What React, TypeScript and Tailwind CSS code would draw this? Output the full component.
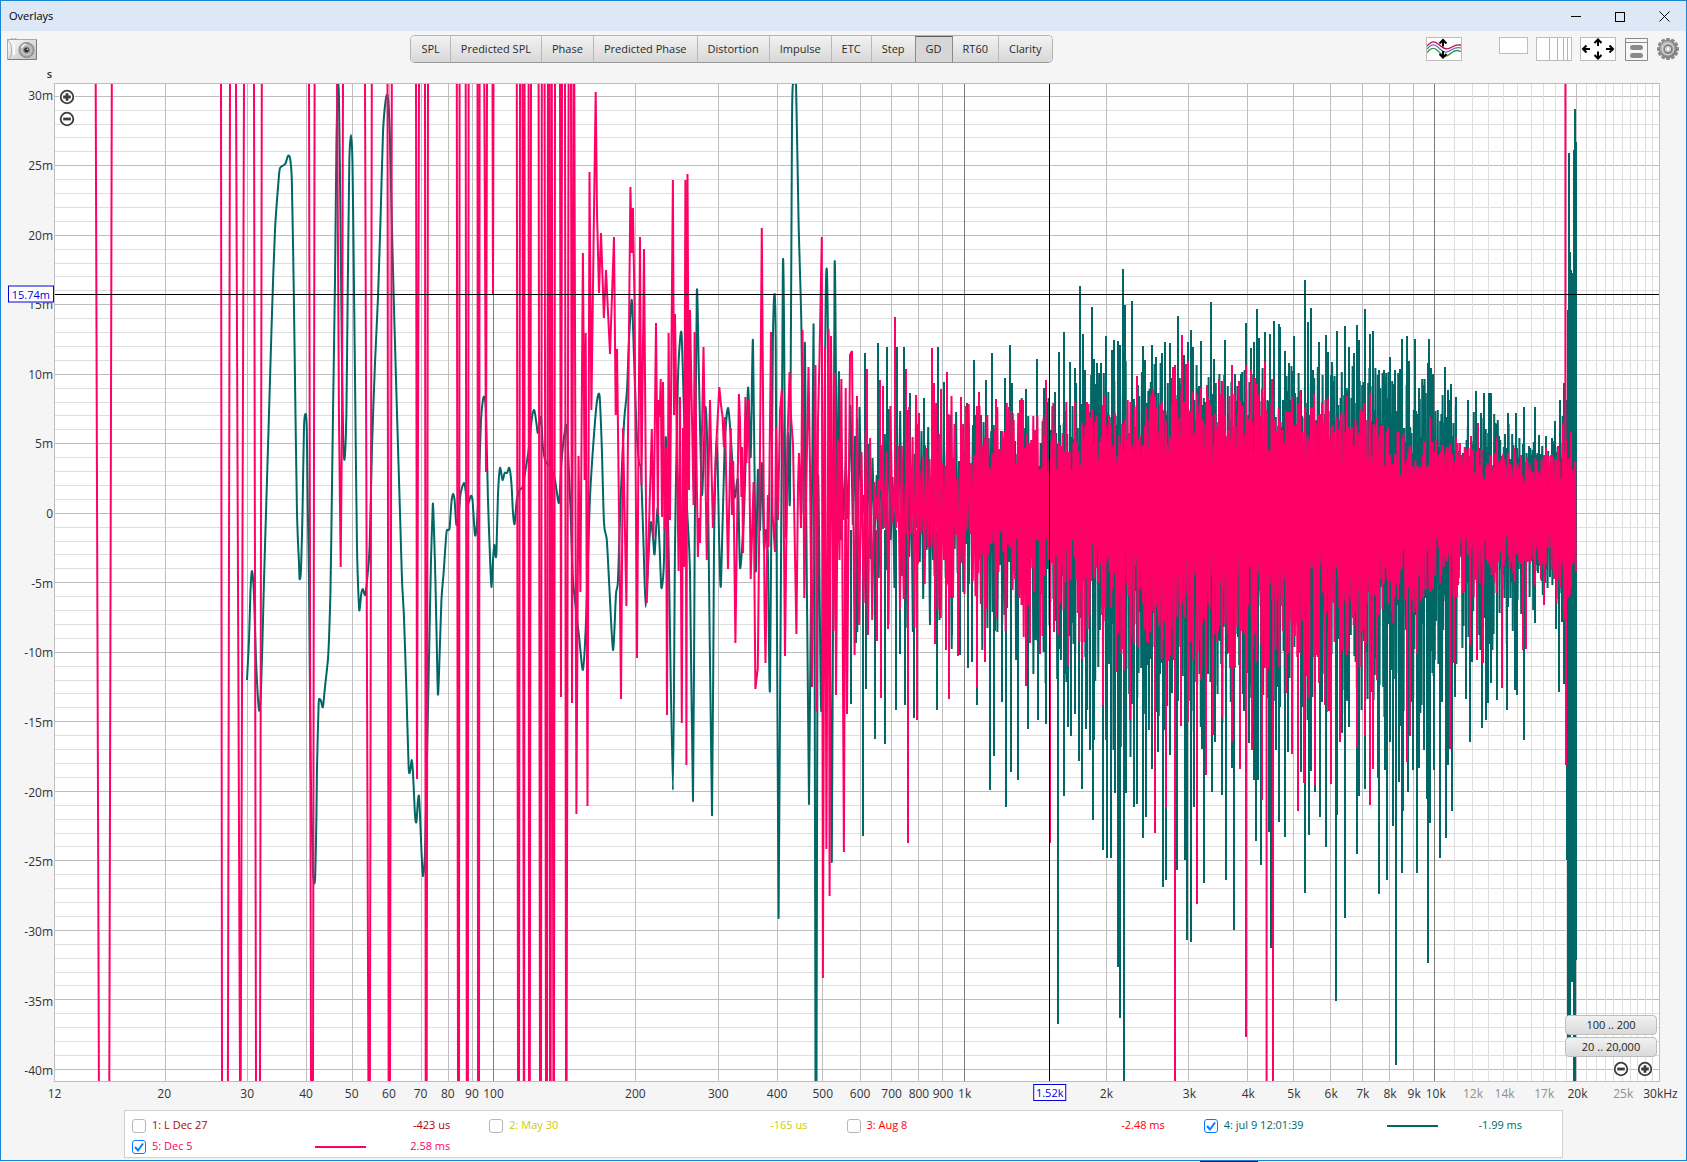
import { useState } from "react";
import { clsx } from "clsx";

const TEAL = "#006666";
const PINK = "#ff0066";

// Axis limits: hertz along the bottom (log), milliseconds up the side (linear).
const F_MIN = 11.67;
const F_MAX = 29930;
const MS_MAX = 30.88;
const MS_MIN = -40.84;
const CURSOR_HZ = 1516;
const CURSOR_MS = 15.74;

const fx = (f: number) => Math.log(f / F_MIN) / Math.log(F_MAX / F_MIN);
const fy = (ms: number) => (MS_MAX - ms) / (MS_MAX - MS_MIN);
const pct = (n: number) => `${n * 100}%`;

const TABS = [
  "SPL",
  "Predicted SPL",
  "Phase",
  "Predicted Phase",
  "Distortion",
  "Impulse",
  "ETC",
  "Step",
  "GD",
  "RT60",
  "Clarity",
];

const Y_TICKS = [30, 25, 20, 15, 10, 5, 0, -5, -10, -15, -20, -25, -30, -35, -40];

const X_TICKS: { f: number; label: string; dim?: boolean }[] = [
  { f: 11.7, label: "12" },
  { f: 20, label: "20" },
  { f: 30, label: "30" },
  { f: 40, label: "40" },
  { f: 50, label: "50" },
  { f: 60, label: "60" },
  { f: 70, label: "70" },
  { f: 80, label: "80" },
  { f: 90, label: "90" },
  { f: 100, label: "100" },
  { f: 200, label: "200" },
  { f: 300, label: "300" },
  { f: 400, label: "400" },
  { f: 500, label: "500" },
  { f: 600, label: "600" },
  { f: 700, label: "700" },
  { f: 800, label: "800" },
  { f: 900, label: "900" },
  { f: 1000, label: "1k" },
  { f: 2000, label: "2k" },
  { f: 3000, label: "3k" },
  { f: 4000, label: "4k" },
  { f: 5000, label: "5k" },
  { f: 6000, label: "6k" },
  { f: 7000, label: "7k" },
  { f: 8000, label: "8k" },
  { f: 9000, label: "9k" },
  { f: 10000, label: "10k" },
  { f: 12000, label: "12k", dim: true },
  { f: 14000, label: "14k", dim: true },
  { f: 17000, label: "17k", dim: true },
  { f: 20000, label: "20k" },
  { f: 25000, label: "25k", dim: true },
  { f: 30000, label: "30kHz" },
];

interface Measurement {
  id: number;
  name: string;
  value: string;
  text: string;
  stroke: string;
  shown: boolean;
}

const MEASUREMENTS: Measurement[] = [
  { id: 1, name: "L Dec 27", value: "-423 us", text: "text-[#b00000]", stroke: "#b00000", shown: false },
  { id: 2, name: "May 30", value: "-165 us", text: "text-[#cccc00]", stroke: "#cccc00", shown: false },
  { id: 3, name: "Aug 8", value: "-2.48 ms", text: "text-[#ff0000]", stroke: "#ff0000", shown: false },
  { id: 4, name: "jul 9 12:01:39", value: "-1.99 ms", text: "text-[#006666]", stroke: TEAL, shown: true },
  { id: 5, name: "Dec 5", value: "2.58 ms", text: "text-[#ff0066]", stroke: PINK, shown: true },
];

// Traces: "x,y" pairs in trace space (TRACE_BOX).
const TRACE_BOX = "55 84 1604 997";

const TEAL_LOW =
  "247,680 249,640 250.5,590 252,571 254,595 256,660 259,710 261,690 263,620 264,580 266,513 268.6,427 272,313 275,230 278.6,180 280,168 284,165 285.7,163 288,156 290,158 291.8,180 293.6,280 295,380 297,513 299,563 299.6,579 301,570 302.5,513 304,427 305.7,414 306.8,430 307.9,513 309,580 310.7,767 312.9,870 315,880 316.4,818 317,767 318.6,705 319.6,699 321,701 322.9,707 325,687 327.9,660 329,639 330.4,594 331.4,530 333,413 335,280 336.4,147 337.9,87 339,100 340.4,213 341.8,347 343.2,440 344.6,459 346.4,413 347.5,313 349.3,163 351,135 352.5,163 353.9,280 355.4,413 357,547 359,607 360,606 361.4,593 363,589 365,595 367,581 369.6,547 372,447 375,363 378,297 380.7,213 383,133 385.7,100 387.9,97 390,140 392,230 394.6,330 397.5,430 400,513 402,580 404,618 406.4,691 408.6,766 410,772 411.8,760 413,773 415,815 416.4,822 417.9,801 419,796 420,815 421.4,849 422.9,876 425,853 426.8,767 429.6,629 431,560 432.5,513 433,504 434,530 435.4,580 436.8,646 437.9,694 439,674 441.4,601 443.6,573 446.4,533 448,530 449.6,528 451.4,503 453,494 454.6,500 456.4,525 459,510 460.7,493 464.3,483 467,502 468.6,503 470.7,496 472.5,500 475,535 477,523 479,480 481,420 482.9,400 484.6,397 486,413 487.9,497 490,557 491.4,587 493,560 494.3,545 495.4,555 496.4,553 497.9,497 500,468 502.5,480 504.6,473 507,473 509.3,468 511.4,483 513,513 514.6,524 516.8,500 519.6,490 522.5,487 526,467 529,447 532,417 534.3,410 536.4,423 538,433 541,417 542.9,447 545.7,462 550.7,467 555,480 559,503 561.4,463 565,430 567,430 570.4,507 573,580 579,636 582.9,670 585.7,629 588,560 590,497 593.6,440 597,401 599.6,396 601.8,447 604,523 606.8,540 609,580 613,650 616,594 618,580 620.7,497 624,423 627,390 629,340 631.8,300 634,357 636.4,427 639,463 641,470 643.6,547 645.7,607 649,547 651,522 653,537 654.6,554 657.5,508 659.6,547 661.4,588 664,560 665.7,437 668.6,547 672.9,790 675,547 677.9,380 681.4,332 684,413 687,507 690,573 693,801 694.6,560 696.8,293 699,380 702,495 705.4,407 707.9,480 712,815 714,547 716.8,437 719.3,547 721,584 724.6,447 728,408 731,440 734.6,497 738,480 740,568 744,513 748,388 750.7,457 753,341 755.7,570 757.9,470 760,530 761.8,463 764,547 766,530 768,560 770,688 772.9,340 775.7,337 778.6,918 782.9,264 785.7,535 787.9,433 790,497 792,123 793.6,83 796,83 798.6,223 801.4,327 803.6,513 805,347 809,804 813.6,326 815.5,1082 816.5,1082 818,480 821.4,710 825.7,298 827.9,330 831.8,862 834.6,266 837,505 839,372 841,540";

const PINK_LOW = [
  "95.7,83 98.9,1082",
  "111.8,83 109.3,1082",
  "221,83 222,1082",
  "230,83 227.9,1082",
  "236,83 240,1082",
  "244,83 240.7,1082",
  "254,83 256,1082",
  "261.8,83 260,1082",
  "309,83 311,1082",
  "314.6,83 313,1082",
  "337,83 339,420 340.7,567 342,420 343,83",
  "365,83 368.4,1082",
  "371.8,83 369.9,1082",
  "387.5,83 388.6,1082",
  "391.8,83 390,1082",
  "416,83 417,779 419,83",
  "425,83 425.7,1082",
  "428,83 426.7,1082",
  "456.8,83 458,1082",
  "459.6,83 459,1082",
  "465.7,83 466.8,1082",
  "468.6,83 467.9,1082",
  "477.5,83 478,1082",
  "479.6,83 479,1082",
  "484.3,83 486,472 487,83",
  "492.5,83 493,294 493.5,83",
  "516.8,83 518,1082",
  "520,83 519,1082",
  "522.5,83 523.8,1082",
  "524.6,83 524.2,1082",
  "528.6,83 529,1082",
  "531,83 529.8,1082",
  "538.6,83 540,1082",
  "541.8,83 541,1082",
  "544.6,83 546,1082",
  "547.9,83 547,1082",
  "549.6,83 550,1082",
  "551.8,83 550.6,1082",
  "551.8,83 553.4,1082",
  "555,83 554,1082",
  "560,83 561,697 562,83",
  "565,83 566,1082",
  "568.6,83 566.6,1082",
  "571,83 572,703 573.5,83",
];

const PINK_MID =
  "574.3,83 576.4,814 578.5,456 580.4,592 582.9,253 584.6,480 585.7,333 587.5,806 589.5,172 591.4,410 593.6,240 595.7,92 597,213 599,293 601,233 603.9,318 606,270 610,354 614,237 615.7,415 617,349 619.6,560 621,699 623,428 626.4,606 628.5,380 630.4,187 631.8,253 632.9,208 634.5,300 637,658 640,237 641.5,485 644,249 646.8,603 651.8,429 653.5,537 656,323 657.9,515 658.6,400 659.6,417 660.7,379 662,517 663,382 664.6,530 666,447 667,715 668.6,333 670,520 672.9,180 674,415 675,314 678.6,571 680,397 681.8,723 683,428 684,567 685.4,180 686.4,765 687.5,174 689,490 690,310 693.6,505 694.6,332 697.9,557 698.9,518 700,543 703.5,347 706.8,560 710,400 712.9,528 716,450 719.3,387 721,405 722.5,416 723.9,447 725,417 728,569 730.7,428 732,515 733.2,461 735.4,643 738.9,394 740,420 741.4,497 742,447 743,553 745.4,397 746.4,463 748.6,400 750.7,579 753.6,482 755.4,689 757.8,668 759.6,495 761.8,228 764.6,612 765.5,663 767.9,495 768.6,547 771,332 772.5,514 775,552 776,428 778,520 780,411 781.8,390 783,434 785,656 787.5,440 789.6,372 791,417 793,444 796.4,634 798,485 799,453 801,528 802.5,330 804.3,598 808.5,367 810,468 812,687 815.5,365 816.8,712 818,420 819.6,354 821.8,237 822.9,978 825,347 826.4,849 828.6,329 829.6,896 831,336 833.5,631 835,373 836,695 838,440 839.5,560 841.4,379 843.9,852 845.7,388 847,714 850,355 852,351 854.6,655 857,396";

// Single peaks that stand out of the noise.
const TEAL_PEAKS =
  "851,704 856,643 863,836 866,689 875,739 885,744 896,710 900,654 905,705 914,718 930,625 937,710 952,635 960,655 968,668 972,662 977,705 990,790 994,756 1002,702 1006,807 1011,772 1018,780 1028,729 1038,720 1046,724 1058,1024 1064,796 1068,727 1071,736 1075,714 1079,761 1082,789 1086,729 1090,750 1093,820 1094,740 865,353 878,343 887,347 897,347 904,347 910,393 916,399 924,398 938,347 944,382 967,403 974,360 986,380 992,353 1005,378 1010,345 1012,383 1026,389 1037,359 1044,388 1055,392 1059,352 1064,332 1070,362 1075,368 1080,286 1083,334 1085,370 1092,307 1094,359 1097,363 1101,363 1106,336 1112,350 1114,340 1118,341 1120,345 1123,269 1125,305 1132,301 1143,346 1145,360 1152,345 1156,357 1162,353 1165,342 1170,343 1178,316 1184,355 1188,342 1191,330 1193,347 1201,341 1211,302 1214,359 1225,340 1246,323 1251,348 1254,342 1257,309 1259,338 1265,332 1270,334 1274,321 1279,324 1280,327 1285,351 1289,363 1294,336 1305,280 1308,322 1311,308 1319,342 1326,335 1328,352 1332,362 1337,331 1345,326 1349,347 1354,353 1357,325 1359,340 1365,309 1370,334 1373,331 1384,370 1390,357 1395,370 1400,369 1402,339 1407,336 1409,361 1415,339 1419,388 1428,363 1429,339 1431,368 1433,374 1445,367 1448,390 1451,384 1456,397 1468,400 1476,391 1484,393 1489,393 1491,393 1508,413 1516,413 1524,407 1535,407 1539,435 1546,436 1552,438 1555,421 1560,400 1564,383 1103,850 1107,858 1111,858 1115,793 1118,967 1120,1018 1124,1082 1126,793 1134,807 1137,804 1143,838 1146,817 1152,769 1158,752 1163,887 1166,880 1170,755 1177,870 1185,860 1187,940 1191,942 1194,807 1202,749 1204,883 1212,792 1215,742 1222,795 1226,880 1232,768 1234,930 1246,865 1249,743 1254,780 1256,841 1258,780 1261,865 1269,832 1271,948 1276,750 1279,822 1285,837 1288,752 1301,772 1305,893 1309,835 1311,771 1315,792 1320,817 1326,847 1336,1001 1337,815 1342,733 1345,918 1349,727 1357,854 1359,796 1365,789 1378,778 1379,894 1385,770 1387,880 1390,742 1393,826 1396,1065 1399,782 1402,873 1403,811 1408,792 1413,770 1417,873 1419,768 1424,750 1427,799 1428,963 1430,823 1434,770 1440,858 1446,838 1448,765 1452,811 1455,697 1466,699 1470,742 1482,728 1486,720 1488,703 1491,683 1497,700 1507,710 1515,690 1517,695 1524,740 1535,623 1544,605 1556,629 1559,692 1564,684 1567,775";

const PINK_PEAKS =
  "867,369 880,380 883,386 895,317 906,369 919,413 932,348 934,383 941,389 947,372 961,397 979,392 996,399 1009,407 1020,400 1023,400 1046,380 1066,411 1088,404 1092,409 877,641 881,698 888,629 908,843 917,720 935,644 946,650 949,699 958,656 977,688 985,662 1026,686 1030,643 1040,654 1050,843 1054,632 1068,666 1082,659 1105,395 1137,376 1153,390 1162,401 1173,367 1175,365 1182,335 1186,364 1188,361 1207,385 1219,379 1222,382 1232,365 1239,381 1246,365 1251,369 1255,378 1257,384 1265,362 1272,379 1292,397 1300,391 1314,394 1322,403 1347,396 1370,393 1430,417 1456,438 1471,436 1478,423 1497,437 1514,448 1546,448 1558,446 1563,423 1571,432 1103,705 1116,672 1124,670 1130,720 1155,833 1166,808 1175,1082 1181,726 1188,722 1197,904 1201,680 1206,775 1213,735 1222,717 1232,742 1240,769 1246,1037 1252,750 1262,800 1266.6,1082 1273,1082 1286,693 1292,754 1298,811 1304,783 1309,698 1315,785 1319,683 1325,705 1329,711 1331,784 1340,742 1357,748 1365,736 1370,805 1373,769 1377,680 1407,762 1410,736 1417,654 1450,749 1454,663 1470,645 1477,660 1483,663 1502,688 1523,650 1526,649 1544,605 1566,765";

type Band = [x: number, top: number, bottom: number];

// Typical reach of the noise above and below zero.
const TEAL_BAND: Band[] = [
  [841, 400, 640],
  [960, 400, 650],
  [1060, 390, 690],
  [1120, 360, 760],
  [1250, 365, 720],
  [1370, 365, 720],
  [1430, 375, 740],
  [1455, 405, 670],
  [1500, 415, 650],
  [1520, 435, 640],
  [1540, 445, 595],
  [1556, 440, 600],
  [1566, 400, 660],
];

const PINK_BAND: Band[] = [
  [857, 390, 640],
  [960, 395, 635],
  [1060, 400, 640],
  [1180, 385, 670],
  [1280, 385, 680],
  [1370, 400, 670],
  [1400, 430, 615],
  [1450, 442, 605],
  [1520, 452, 590],
  [1550, 455, 580],
  [1558, 448, 610],
  [1576, 448, 618],
];

function bandAt(band: Band[], x: number) {
  const i = Math.max(1, band.findIndex((b) => b[0] >= x));
  const [x0, t0, b0] = band[i - 1];
  const [x1, t1, b1] = band[i];
  const k = (x - x0) / (x1 - x0);
  return [t0 + (t1 - t0) * k, b0 + (b1 - b0) * k];
}

// Zigzag inside a band; samples crowd together as frequency rises.
function noise(band: Band[], seed: number) {
  let s = seed;
  const rand = () => {
    s = (s * 1664525 + 1013904223) % 4294967296;
    return s / 4294967296;
  };
  const end = band[band.length - 1][0];
  const pts: string[] = [];
  let up = true;
  for (let x = band[0][0]; x <= end; ) {
    const [top, bottom] = bandAt(band, x);
    const step = Math.max(0.6, 2.4 * Math.exp(-(x - 841) / 230));
    const r = 1 - rand() * (0.5 + 0.2 * step);
    const y = up ? 505 - (505 - top) * r : 515 + (bottom - 515) * Math.abs(r) ** 1.5;
    pts.push(`${x.toFixed(1)},${y.toFixed(0)}`);
    up = !up;
    x += step;
  }
  return "M" + pts.join("L");
}

const line = (pts: string) => "M" + pts.split(" ").join("L");

// Catmull-Rom through the points.
function curve(pts: string) {
  const p = pts.split(" ").map((s) => s.split(",").map(Number));
  let d = `M${p[0]}`;
  for (let i = 0; i < p.length - 1; i++) {
    const a = p[Math.max(0, i - 1)];
    const b = p[i];
    const c = p[i + 1];
    const e = p[Math.min(p.length - 1, i + 2)];
    const c1 = [b[0] + (c[0] - a[0]) / 8, b[1] + (c[1] - a[1]) / 8];
    const c2 = [c[0] - (e[0] - b[0]) / 8, c[1] - (e[1] - b[1]) / 8];
    d += `C${c1} ${c2} ${c}`;
  }
  return d;
}

const peaks = (pts: string, from: number) =>
  pts
    .split(" ")
    .map((p) => {
      const [x, y] = p.split(",");
      return `M${x} ${Number(y) < from ? from - 20 : from + 20}V${y}`;
    })
    .join("");

const TEAL_PATHS = [
  curve(TEAL_LOW),
  noise(TEAL_BAND, 7),
  peaks(TEAL_PEAKS, 510),
  "M1567 400V860M1568 310V1050M1569 153V1050M1570 252V1050M1571 270V982M1572 273V982M1573 280V870M1574 150V1082M1575 109V1082M1576 142V960",
];

const PINK_PATHS = [
  PINK_LOW.map(line).join(""),
  line(PINK_MID),
  noise(PINK_BAND, 42),
  peaks(PINK_PEAKS, 510),
  "M1565.4 83V560M1564 460V620M1566 440V620",
];

function Trace({ paths, color }: { paths: string[]; color: string }) {
  return (
    <g fill="none" stroke={color} strokeWidth={2} strokeLinejoin="bevel">
      {paths.map((d, i) => (
        <path key={i} d={d} vectorEffect="non-scaling-stroke" />
      ))}
    </g>
  );
}

function gridFrequencies() {
  const out: { f: number; color: string }[] = [];
  for (const decade of [10, 100, 1000]) {
    for (let i = 2; i <= 10; i++) {
      out.push({ f: decade * i, color: i === 10 ? "#7d7d7d" : "#bebebe" });
    }
  }
  for (let k = 11; k < 30; k++) {
    out.push({ f: k * 1000, color: k === 20 ? "#bebebe" : "#dedede" });
  }
  return out.sort((a, b) => (a.color < b.color ? 1 : -1));
}

function Grid() {
  const rows = [];
  for (let ms = -40; ms <= 30; ms++) rows.push(ms);
  rows.sort((a, b) => Number(a % 5 === 0) - Number(b % 5 === 0));

  return (
    <g shapeRendering="crispEdges">
      {rows.map((ms) => (
        <line
          key={ms}
          x1="0"
          x2="100%"
          y1={pct(fy(ms))}
          y2={pct(fy(ms))}
          stroke={ms % 5 === 0 ? "#bebebe" : "#dedede"}
        />
      ))}
      {gridFrequencies().map(({ f, color }) => (
        <line key={f} x1={pct(fx(f))} x2={pct(fx(f))} y1="0" y2="100%" stroke={color} />
      ))}
    </g>
  );
}

function ZoomButton({ label, minus }: { label: string; minus?: boolean }) {
  return (
    <button type="button" aria-label={label} className="block size-4 rounded-full bg-white">
      <svg viewBox="0 0 16 16" className="size-4" fill="none" stroke="#3c3c3c">
        <circle cx="8" cy="8" r="6.3" strokeWidth="1.8" />
        <path d={minus ? "M4.2 8h7.6" : "M4.2 8h7.6M8 4.2v7.6"} strokeWidth="2.8" />
      </svg>
    </button>
  );
}

function RangeButton({ children }: { children: string }) {
  return (
    <button
      type="button"
      className="h-5 w-[92px] rounded border border-[#bdbdbd] bg-linear-to-b from-[#f2f2f2] to-[#dadada] text-[11px] leading-[18px] text-[#222]"
    >
      {children}
    </button>
  );
}

function Plot({ shown }: { shown: (id: number) => boolean }) {
  return (
    <div className="grid flex-1 grid-cols-[53px_1fr_26px] grid-rows-[1fr_28px]">
      <div className="relative">
        <svg className="absolute inset-0 size-full overflow-visible text-xs" fill="#333">
          <text x="51" y="-5" textAnchor="end" className="text-[11px] font-semibold">
            s
          </text>
          {Y_TICKS.map((ms) => (
            <text key={ms} x="52" y={pct(fy(ms))} dy="5" textAnchor="end">
              {ms === 0 ? "0" : `${ms}m`}
            </text>
          ))}
        </svg>
        <output
          className="absolute right-0 -translate-y-1/2 border border-[#0000dd] bg-white px-[3px] text-[11px] leading-[15px] text-[#0000dd]"
          style={{ top: pct(fy(CURSOR_MS)) }}
        >
          15.74m
        </output>
      </div>

      <div className="relative border border-[#bebebe] bg-white">
        <svg className="absolute inset-0 size-full overflow-visible">
          <Grid />
          <svg viewBox={TRACE_BOX} width="100%" height="100%" preserveAspectRatio="none">
            {shown(4) && <Trace paths={TEAL_PATHS} color={TEAL} />}
            {shown(5) && <Trace paths={PINK_PATHS} color={PINK} />}
          </svg>
          <g stroke="#000" shapeRendering="crispEdges">
            <line x1="0" x2="100%" y1={pct(fy(CURSOR_MS))} y2={pct(fy(CURSOR_MS))} />
            <line x1={pct(fx(CURSOR_HZ))} x2={pct(fx(CURSOR_HZ))} y1="0" y2="100%" />
          </g>
        </svg>
        <div className="absolute top-[5px] left-1 flex flex-col gap-[6px]">
          <ZoomButton label="Zoom in vertically" />
          <ZoomButton label="Zoom out vertically" minus />
        </div>
        <div className="absolute right-[2px] bottom-1 flex flex-col items-end gap-[2px]">
          <RangeButton>100 .. 200</RangeButton>
          <RangeButton>20 .. 20,000</RangeButton>
          <div className="flex gap-2 pt-[2px] pr-1">
            <ZoomButton label="Zoom out horizontally" minus />
            <ZoomButton label="Zoom in horizontally" />
          </div>
        </div>
      </div>

      <div className="relative col-start-2 row-start-2">
        <svg className="absolute inset-0 size-full overflow-visible text-xs">
          {X_TICKS.map(({ f, label, dim }) => (
            <text key={f} x={pct(fx(f))} y="16" textAnchor="middle" fill={dim ? "#8f8f8f" : "#333"}>
              {label}
            </text>
          ))}
        </svg>
        <output
          className="absolute top-[2px] -translate-x-1/2 border border-[#0000dd] bg-white px-[2px] text-[11px] leading-[15px] text-[#0000dd]"
          style={{ left: pct(fx(CURSOR_HZ)) }}
        >
          1.52k
        </output>
      </div>
    </div>
  );
}

function TitleBar() {
  return (
    <header className="flex h-[30px] items-center justify-between bg-[#dce8f6] pl-2 text-black">
      <h1 className="pt-[1px] text-[11px]">Overlays</h1>
      <div className="flex">
        <button type="button" aria-label="Minimize" className="grid h-[30px] w-11 place-items-center">
          <svg viewBox="0 0 11 11" className="size-[11px]" stroke="currentColor" shapeRendering="crispEdges">
            <path d="M0 5.5h10" />
          </svg>
        </button>
        <button type="button" aria-label="Maximize" className="grid h-[30px] w-11 place-items-center">
          <svg viewBox="0 0 11 11" className="size-[11px]" fill="none" stroke="currentColor" shapeRendering="crispEdges">
            <path d="M.5 1.5h9v9h-9z" />
          </svg>
        </button>
        <button type="button" aria-label="Close" className="grid h-[30px] w-11 place-items-center">
          <svg viewBox="0 0 11 11" className="size-[11px]" stroke="currentColor">
            <path d="M.5 .5l10 10M10.5 .5l-10 10" />
          </svg>
        </button>
      </div>
    </header>
  );
}

function CameraIcon() {
  return (
    <svg viewBox="0 0 30 23" className="h-[23px] w-[30px]">
      <defs>
        <linearGradient id="body" x1="0" y1="0" x2="1" y2="1">
          <stop offset="0" stopColor="#fdfdfd" />
          <stop offset="1" stopColor="#bdbdbd" />
        </linearGradient>
        <radialGradient id="lens">
          <stop offset="0" stopColor="#3a3a3a" />
          <stop offset=".25" stopColor="#6a6a6a" />
          <stop offset=".6" stopColor="#c9c9c9" />
          <stop offset="1" stopColor="#8d8d8d" />
        </radialGradient>
      </defs>
      <path d="M4 1h2v2H4zM7.5 1h2v2h-2z" fill="#b5b5b5" />
      <rect x=".5" y="2.5" width="29" height="20" fill="url(#body)" stroke="#a8a8a8" />
      <path d="M1 3c4 4 5 14 1 19" fill="none" stroke="#b0b0b0" />
      <path d="M7 7v11" stroke="#fff" strokeWidth="2" />
      <circle cx="19.5" cy="13" r="7.5" fill="url(#lens)" stroke="#8a8a8a" />
      <path d="M14.5 11a5.500 5.500 0 0 1 4-3.800" fill="none" stroke="#f0f0f0" strokeWidth="1.5" />
      <circle cx="19.5" cy="13" r="2.2" fill="#2f2f2f" />
      <circle cx="20.3" cy="12.2" r=".7" fill="#fff" />
      <path d="M1 22.5h28.500V3" fill="none" stroke="#7d7d7d" />
    </svg>
  );
}

function GearIcon() {
  return (
    <svg viewBox="0 0 24 24" className="size-6">
      <defs>
        <linearGradient id="gear" x1="0" y1="0" x2="1" y2="1">
          <stop offset="0" stopColor="#c8c8c8" />
          <stop offset="1" stopColor="#6f6f6f" />
        </linearGradient>
      </defs>
      <g fill="#8b8b8b">
        {[0, 30, 60, 90, 120, 150, 180, 210, 240, 270, 300, 330].map((a) => (
          <path key={a} d="M10.3 1h3.4l.6 4h-4.6z" transform={`rotate(${a} 12 12)`} />
        ))}
      </g>
      <circle cx="12" cy="12" r="8.500" fill="url(#gear)" stroke="#7c7c7c" strokeWidth=".8" />
      <circle cx="12" cy="12" r="5.8" fill="none" stroke="#d6d6d6" strokeWidth="1.2" />
      <circle cx="12" cy="12" r="3.6" fill="#e9e9e9" stroke="#787878" strokeWidth="1.2" />
      <rect x="10.5" y="10" width="3" height="4" fill="#fff" stroke="#aaa" strokeWidth=".6" />
    </svg>
  );
}

function ToolIcons() {
  return (
    <div className="flex items-start">
      <button type="button" aria-label="Separate traces" className="mr-[37px] border border-[#bdbdbd] bg-white">
        <svg viewBox="0 0 34 22" className="h-[22px] w-[34px]" fill="none">
          <path d="M0 8c5-6 8-5 13-.5s8 4 12 1.500 6-2 9-2" stroke="#c01040" strokeWidth="1.3" />
          <path d="M0 11c5-6 8-5 13 0s8 3 12 .5 6-2 9-1.500" stroke="#6a6ad8" strokeWidth="1.3" />
          <path d="M0 14.5c5-6 8-5 13 .5s8 2.500 12-.5 6-2 9-1" stroke="#2c9c3a" strokeWidth="1.3" />
          <path d="M16 8.500V2.500M12.500 5.500L16 2l3.500 3.500M16 13v6M12.500 16L16 19.500l3.500-3.500" stroke="#000" strokeWidth="2" />
        </svg>
      </button>
      <button type="button" aria-label="Plain background" className="mr-2 h-[17px] w-[29px] border border-[#bdbdbd] bg-white" />
      <button type="button" aria-label="Frequency grid" className="mr-2 border border-[#bdbdbd] bg-white">
        <svg viewBox="0 0 34 22" className="h-[22px] w-[34px]" stroke="#b4b4b4" shapeRendering="crispEdges">
          <path d="M12.5 0v22M20.5 0v22M26.5 0v22M30.5 0v22" />
        </svg>
      </button>
      <button type="button" aria-label="Limits" className="mr-[9px] border border-[#bdbdbd] bg-white">
        <svg viewBox="0 0 34 22" className="h-[22px] w-[34px]" fill="none" stroke="#000" strokeWidth="2">
          <path d="M17 8V2M13.5 5L17 1.500 20.5 5M17 13.500v6M13.5 17l3.500 3.500 3.500-3.500M9 11H2M5.500 7.500L2 11l3.500 3.500M25 11h7M28.500 7.500L32 11l-3.500 3.500" />
        </svg>
      </button>
      <button type="button" aria-label="Legend" className="mr-2 pt-[1px]">
        <svg viewBox="0 0 23 23" className="size-[23px]" fill="none" stroke="#8a8a8a">
          <path d="M.5 .5h22v22H.5zM.5 4.500h22" fill="#f7f7f7" />
          <rect x="5" y="7" width="13" height="5" rx="2.500" fill="#8a8a8a" stroke="none" />
          <rect x="5" y="15" width="13" height="5" rx="2.500" fill="#8a8a8a" stroke="none" />
        </svg>
      </button>
      <button type="button" aria-label="Graph controls">
        <GearIcon />
      </button>
    </div>
  );
}

function Legend({
  shown,
  toggle,
}: {
  shown: (id: number) => boolean;
  toggle: (id: number) => void;
}) {
  return (
    <ul className="mx-[123px] mb-[2px] grid grid-cols-4 border border-[#d0d0d0] bg-white px-1 pt-1 text-[11px]">
      {MEASUREMENTS.map((m) => (
        <li key={m.id} className={clsx("flex h-[21px] items-center pr-9 pl-[3px]", m.text)}>
          <label className="flex flex-1 items-center gap-[6px]">
            <span className="grid">
              <input
                type="checkbox"
                checked={shown(m.id)}
                onChange={() => toggle(m.id)}
                className="col-start-1 row-start-1 size-[14px] appearance-none rounded-[3px] border border-[#b8b8b8] bg-white checked:border-[#0a7bff]"
              />
              {shown(m.id) && (
                <svg
                  viewBox="0 0 14 14"
                  className="pointer-events-none col-start-1 row-start-1 size-[14px]"
                  fill="none"
                  stroke="#0a7bff"
                  strokeWidth="2"
                >
                  <path d="M3 7l3 3.500L11 3.500" />
                </svg>
              )}
            </span>
            {m.id}: {m.name}
          </label>
          {shown(m.id) && (
            <svg className="h-[2px] w-[51px]" aria-hidden="true">
              <rect width="100%" height="2" fill={m.stroke} />
            </svg>
          )}
          <span className="w-[84px] text-right">{m.value}</span>
        </li>
      ))}
    </ul>
  );
}

export default function App() {
  const [tab, setTab] = useState("GD");
  const [visible, setVisible] = useState(() => MEASUREMENTS.filter((m) => m.shown).map((m) => m.id));

  const shown = (id: number) => visible.includes(id);
  const toggle = (id: number) =>
    setVisible((ids) => (ids.includes(id) ? ids.filter((i) => i !== id) : [...ids, id]));

  return (
    <div className="flex min-h-screen flex-col bg-[#e4ecf2] font-['Open_Sans',sans-serif]">
      <main className="flex flex-1 flex-col border border-[#1b83d6] bg-[#f5f5f5]">
        <TitleBar />
        <div className="flex items-start justify-between px-[6px] pt-1">
          <button type="button" aria-label="Capture image" className="pt-[2px]">
            <CameraIcon />
          </button>
          <nav className="flex h-7 overflow-hidden rounded-[5px] border border-[#b4b4b4] border-b-[#9a9a9a]">
            {TABS.map((name) => (
              <button
                key={name}
                type="button"
                onClick={() => setTab(name)}
                className={clsx(
                  "border-r px-[10px] text-[11px] text-[#2a2a2a] last:border-r-0",
                  name === tab
                    ? "-ml-px border-x border-t border-[#8a8a8a] border-t-[#606060] bg-[#d6d6d6]"
                    : "border-[#b8b8b8] bg-linear-to-b from-[#f2f2f2] to-[#d8d8d8] pt-[1px]",
                )}
              >
                {name}
              </button>
            ))}
          </nav>
          <div className="pt-[2px]">
            <ToolIcons />
          </div>
        </div>
        <div className="flex flex-1 flex-col pt-5">
          <Plot shown={shown} />
        </div>
        <Legend shown={shown} toggle={toggle} />
      </main>
      <div className="flex h-[1px] justify-end pr-[429px]">
        <span className="h-[1px] w-[58px] bg-[#30103a]" />
      </div>
    </div>
  );
}
